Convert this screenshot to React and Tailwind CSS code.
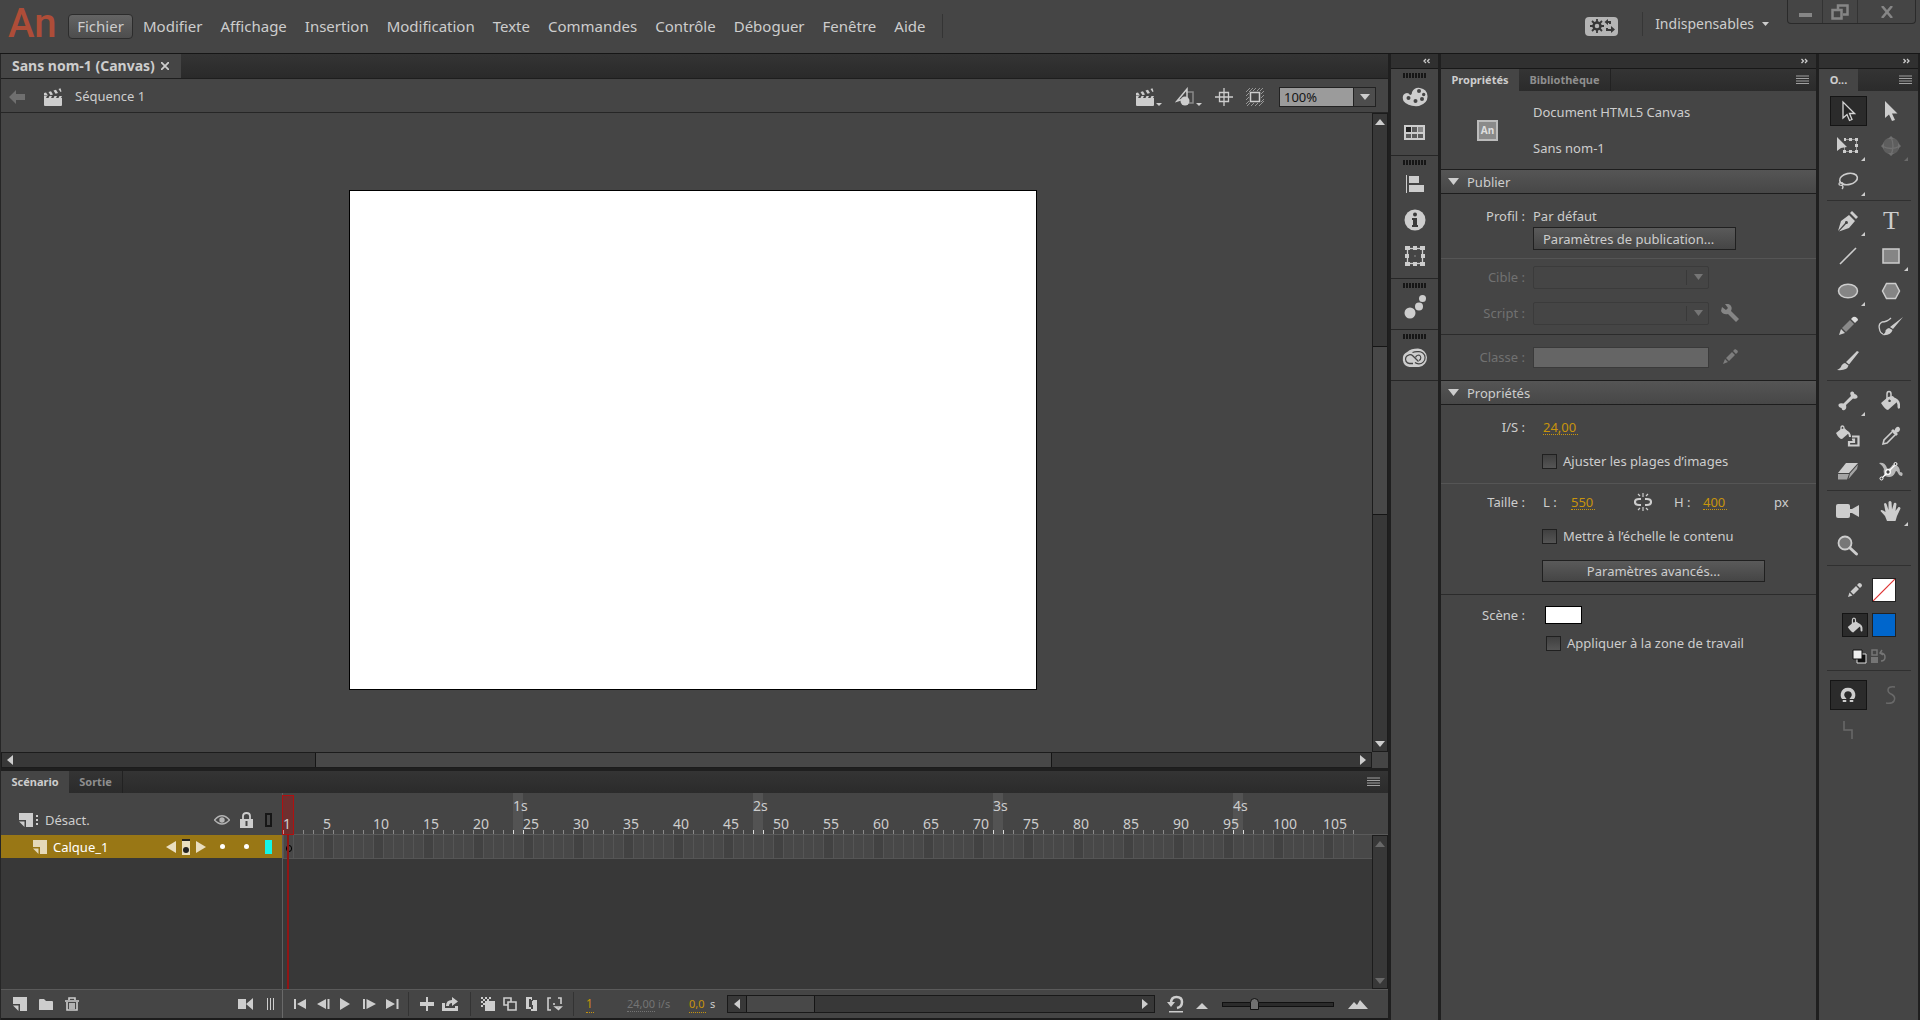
import clsx from 'clsx';

const menus = ['Modifier', 'Affichage', 'Insertion', 'Modification', 'Texte', 'Commandes', 'Contrôle', 'Déboguer', 'Fenêtre', 'Aide'];

const Svg = ({ w = 20, h = 20, className, children }) => (
  <svg width={w} height={h} viewBox={`0 0 ${w} ${h}`} fill="currentColor" className={clsx('shrink-0', className)} aria-hidden="true">
    {children}
  </svg>
);

const line = { fill: 'none', stroke: 'currentColor' };

const Tri = ({ dir, className }) => {
  const d = {
    up: 'M0 8L5 2L10 8Z',
    down: 'M0 2H10L5 8Z',
    left: 'M8 0V10L2 5Z',
    right: 'M2 0V10L8 5Z',
  };
  return <Svg w={10} h={10} className={className}><path d={d[dir]} /></Svg>;
};

const Clapper = () => (
  <Svg w={20} h={20}>
    <path d="M1 11H19V18Q19 19 18 19H2Q1 19 1 18Z" />
    <path d="M1 6L3 5.500L5 8.500H1ZM5.500 5L8 4.300L10 7.500L7.500 8.300ZM10.500 3.500L13 2.800L15 6L12.500 6.800ZM15.500 2L17.500 1.200L18.500 4.500L17.500 5Z" />
    <path d="M1 9H4L3 11H1ZM6.500 9H9L8 11H5.500ZM11.500 9H14L13 11H10.500ZM16.500 9H19L18 11H15.500Z" />
  </Svg>
);

const Shapes = () => (
  <Svg w={20} h={20}>
    <path d="M11 5H18V16H11" {...line} strokeWidth="1.500" opacity="0.500" />
    <path d="M12 2V11L2 14Z" {...line} strokeWidth="1.500" />
    <circle cx="10" cy="14" r="4.500" />
  </Svg>
);

const Center = () => (
  <Svg w={18} h={18}><path d="M9 0V18M0 9H18M4.500 4.500H13.500V13.500H4.500Z" {...line} strokeWidth="1.300" /></Svg>
);

const Clip = () => (
  <Svg w={18} h={18}>
    <rect x="4.500" y="4.500" width="9" height="9" {...line} strokeWidth="1.500" />
    <path d="M0 4L4 0M3 4L7 0M7 3L10 0M11 3L14 0M14 3L17 0M15 6L18 3M15 10L18 7M15 14L18 11M0 8L3 5M0 12L3 9M0 16L3 13M1 18L4 15M5 18L8 15M9 18L12 15M13 18L18 13" {...line} strokeWidth="1" opacity="0.600" />
  </Svg>
);

const Menu = () => (
  <Svg w={13} h={10}><path d="M0 1H13M0 3.500H13M0 6H13M0 8.500H13" {...line} strokeWidth="1" /></Svg>
);

const Chevrons = ({ back }) => (
  <Svg w={7} h={6}>
    <path d={back ? 'M3 1L1 3L3 5M6.500 1L4.500 3L6.500 5' : 'M0.500 1L2.500 3L0.500 5M4 1L6 3L4 5'} {...line} strokeWidth="1.300" />
  </Svg>
);

const Bucket = () => (
  <Svg w={22} h={22}>
    <path fillRule="evenodd" d="M1 13L8 7L13 6L17 12L8 20Q5 19.500 1 13ZM9.500 9.500A1.300 1.300 0 1 0 9.600 9.500" />
    <path d="M7 9V4Q7 1.500 9 1.500Q11 1.500 11 4V10" {...line} strokeWidth="1.500" />
    <path d="M13 7Q19.500 9 20 14V18Q18 20 17.500 17Q18 12 14 10Z" />
  </Svg>
);

const Pencil = () => (
  <Svg w={20} h={20}>
    <path d="M1 19L3 13L7 17Z" />
    <path d="M4 12L12 4L16 8L8 16Z" opacity="0.500" />
    <path d="M13 3L15 1Q17 0 19 2T19 5L17 7Z" fill="#ddd" />
  </Svg>
);

const ic = {
  palette: (
    <Svg w={26} h={20}>
      <path fillRule="evenodd" d="M10 5Q13 0 18 1Q25 2 25.500 9Q26 16 17 19Q6 20 1.500 14Q-1 7 5 6Q7 6 8 8Q10 8 10 5ZM15 4A2 2 0 1 0 19 4A2 2 0 1 0 15 4M20 7.500A1.700 1.700 0 1 0 23.400 7.500A1.700 1.700 0 1 0 20 7.500M18 12A2 2 0 1 0 22 12A2 2 0 1 0 18 12M11.500 14A2 2 0 1 0 15.500 14A2 2 0 1 0 11.500 14M4.500 11A2 2 0 1 0 8.500 11A2 2 0 1 0 4.500 11" />
    </Svg>
  ),
  swatches: (
    <Svg w={21} h={16}>
      <path d="M0 0H21V15H0Z" />
      <path d="M2 2H7V7H2Z" fill="#222" />
      <path d="M8 2H13V7H8ZM2 9H7V13H2ZM8 9H13V13H8ZM14 9H19V13H14Z" fill="#5c5c5c" />
      <path d="M14 2H19V7H14Z" fill="#888" />
    </Svg>
  ),
  align: <Svg w={18} h={18}><path d="M0 0H1V18H0ZM3 1H13V8H3ZM3 10H18V17H3Z" /></Svg>,
  info: (
    <Svg w={22} h={22}>
      <circle cx="11" cy="11" r="10.500" />
      <circle cx="11" cy="5.500" r="2" fill="#3a3a3a" />
      <path d="M8 9H13V16H14V18H8V16H9V11H8Z" fill="#3a3a3a" />
    </Svg>
  ),
  transform: (
    <Svg w={20} h={20}>
      <rect x="2.500" y="2.500" width="15" height="15" {...line} strokeWidth="1.300" />
      <path d="M0 0H5V4H0ZM8 0H12V4H8ZM15 0H20V4H15ZM0 8H4V12H0ZM16 8H20V12H16ZM0 16H5V20H0ZM8 16H12V20H8ZM15 16H20V20H15ZM9.500 9.500H10.500V10.500H9.500Z" />
    </Svg>
  ),
  dots: <Svg w={22} h={24}><circle cx="6" cy="18" r="5.500" /><circle cx="15" cy="11.500" r="4" /><circle cx="18.500" cy="3.500" r="3.500" /></Svg>,
  cloud: (
    <Svg w={28} h={20}>
      <path d="M8.500 19A8 8 0 0 1 6.500 3.800Q10 0.500 17 0.500A9.300 9.300 0 0 1 18 19Z" />
      <path d="M12 15.500H8.500A4.400 4.400 0 1 1 12 8L17.500 13.500" fill="none" stroke="#454545" strokeWidth="1.300" />
      <path d="M11.500 4.500Q14 3.500 17 3.700A6.100 6.100 0 1 1 17.500 15.800Q15.500 15.800 14 14.500M14.500 9.500Q15.500 7 18 7A3 3 0 0 1 18 12.500" fill="none" stroke="#454545" strokeWidth="1.200" />
    </Svg>
  ),
};

const tool = {
  select: <Svg w={16} h={22}><path d="M3 2V18L7 14.500L9.500 20.500L12 19.500L9.500 13.500H14.500Z" fill="#262626" stroke="#d4d4d4" strokeWidth="1.300" /></Svg>,
  subselect: <Svg w={16} h={22}><path d="M2 1V18L6 14.500L9 21L12 20L9 13.500H14.500Z" /></Svg>,
  free: (
    <Svg w={22} h={18}>
      <path d="M0 0V14L4 11L10 10Z" />
      <path d="M8 2.500H19.500V14.500H7.500V10" {...line} strokeWidth="1" opacity="0.600" />
      <path d="M6 13H9V16H6ZM12 13H15V16H12ZM18 13H21V16H18ZM18 1H21V4H18ZM12 1H15V4H12ZM18 7H21V10H18ZM7 1H9V4H7Z" />
    </Svg>
  ),
  globe: (
    <Svg w={20} h={20} className="text-[#707070]">
      <circle cx="10" cy="10" r="8.500" opacity="0.600" />
      <path d="M10 1Q14 10 10 19M1 10Q10 15 19 10" {...line} strokeWidth="1.300" />
      <path d="M10 0L13 3H7ZM10 20L13 17H7ZM0 10L3 7V13ZM20 10L17 7V13Z" />
    </Svg>
  ),
  lasso: (
    <Svg w={22} h={18}>
      <ellipse cx="11.500" cy="7" rx="9" ry="5.500" {...line} strokeWidth="1.600" transform="rotate(-12 11.500 7)" />
      <path d="M4 10Q1 11 2.500 13Q6 14 6 11.500Q5 10 3.500 11.500M5 13Q7 15 5 17" {...line} strokeWidth="1.300" />
    </Svg>
  ),
  pen: (
    <Svg w={22} h={22}>
      <path d="M1 21L4 11L12 5L18 11L12 18L2 21.500L9 14A1.500 1.500 0 1 0 8 13Z" />
      <path d="M13 3L15 1L21 7L19 9Z" />
    </Svg>
  ),
  text: <span className="font-['Liberation_Serif',serif] text-[26px] leading-6">T</span>,
  line: <Svg w={18} h={18}><path d="M1 17L17 1" {...line} strokeWidth="1.600" /></Svg>,
  rect: <Svg w={18} h={16}><rect x="1" y="1" width="16" height="14" fill="#858585" stroke="currentColor" strokeWidth="1.500" /></Svg>,
  oval: <Svg w={22} h={16}><ellipse cx="11" cy="8" rx="9.500" ry="6.800" fill="#858585" stroke="currentColor" strokeWidth="1.500" /></Svg>,
  poly: <Svg w={20} h={18}><path d="M5.500 1.500H14.500L18.500 9L14.500 16.500H5.500L1.500 9Z" fill="#858585" stroke="currentColor" strokeWidth="1.500" /></Svg>,
  pencil: <Pencil />,
  artbrush: (
    <Svg w={26} h={20}>
      <path d="M25 1L15 13L12 11Z M11 12L14.500 14Q13 20 4 19Q8 17 7.500 14.500Q9 12 11 12Z" />
      <path d="M13 2Q9 6 4 6Q0 8 1.500 13Q2 17 5 18" {...line} strokeWidth="1.300" />
    </Svg>
  ),
  brush: <Svg w={22} h={20}><path d="M22 1L20 0L9 11L12 13.500Z M8 12L11.500 14.500Q10 20 0 19Q4 17 4.500 14.500Q6 12 8 12Z" /></Svg>,
  bone: <Svg w={20} h={20}><path d="M13 5Q11 1 14 0.500Q16 0 16.500 3Q20 4 19.500 6.500Q18 8.500 15 7.500L8 14Q9 18 6.500 19Q4 20 3.500 17Q0 16 0.500 13.500Q2 11.500 5.500 12.500Z" /></Svg>,
  bucket: <Bucket />,
  ink: (
    <Svg w={24} h={22}>
      <path d="M0 8L5 4L9 3.500L13 8L6 14Q3 14 0 8Z" />
      <path d="M5 6V3Q5 1 6.500 1T8 3V7" {...line} strokeWidth="1.300" />
      <path d="M10 5Q15 7 15 12H13Q13 9 11 8Z" />
      <path d="M16 11.500H22.500V20.500H13V17H18V14.500H16" {...line} strokeWidth="2.200" />
    </Svg>
  ),
  dropper: (
    <Svg w={20} h={20}>
      <path d="M10 5L12 3L13.500 4.500Q15 0 18 1Q20 3 18.500 5Q17 6.500 15.500 6.500L17 8L15 10Z" />
      <path d="M11 6L3 14L2 18L6 17L14 9" {...line} strokeWidth="1.600" />
    </Svg>
  ),
  eraser: (
    <Svg w={22} h={18}>
      <path d="M9 1H21L12 11H1Z" />
      <path d="M1 12H12L10 17.500H1ZM13 11.500L21 2.500L20 7L11.500 17Z" opacity="0.700" />
    </Svg>
  ),
  width: (
    <Svg w={24} h={20}>
      <path d="M0 2Q6 1 8 7Q9 9 12 6Q14 2 17 4Q21 6 21 11Q25 11 23 15Q20 15 19 12Q17 8 16 12Q13 18 6 15Q4 12 5 8Q3 4 0 2Z" opacity="0.850" />
      <path d="M2 18L17 3" stroke="#fff" strokeWidth="1.300" />
      <circle cx="9" cy="11" r="2.300" fill="#454545" stroke="#fff" strokeWidth="1.300" />
      <circle cx="2.500" cy="17.500" r="1.500" fill="#454545" stroke="#fff" />
      <circle cx="16.500" cy="3" r="1.500" fill="#454545" stroke="#fff" />
    </Svg>
  ),
  camera: <Svg w={24} h={16}><rect x="0" y="1" width="14" height="14" rx="2" /><path d="M14 6H16L23 2V14L16 10H14Z" /></Svg>,
  hand: (
    <Svg w={22} h={22}>
      <path d="M7 21L5 16L0.500 11Q1 8.500 5.500 12L4 4Q5 2 6.500 4L8.500 10L8.500 2Q10 0 11.500 2L12 9.500L14 3Q16 2 16.500 4L15.500 11L18.500 7Q20.500 6.500 20.500 8.500L17 16L15.500 21Z" />
    </Svg>
  ),
  zoom: (
    <Svg w={22} h={22}>
      <circle cx="8" cy="8" r="6.500" fill="#777" stroke="currentColor" strokeWidth="1.800" />
      <path d="M13 13L19.500 19" {...line} strokeWidth="3" strokeLinecap="round" />
    </Svg>
  ),
  magnet: (
    <Svg w={18} h={18}>
      <path d="M5.500 16V13Q3 11 3.500 8Q4.500 3.500 9 3.500T14.500 8Q15 11 12.500 13V16" {...line} strokeWidth="3.500" />
      <path d="M3 13.500H8M10 13.500H15" stroke="#2b2b2b" />
    </Svg>
  ),
  smooth: <Svg w={14} h={20} className="text-[#696969]"><path d="M11 2Q4 1 4 5Q4 8 8 9.500Q12 12 10 16Q8 19 2 18" {...line} strokeWidth="1.500" /></Svg>,
  straighten: <Svg w={14} h={20} className="text-[#696969]"><path d="M3 1V10H11V19" {...line} strokeWidth="1.500" /></Svg>,
};

const toolGroups = [
  [
    ['select', 'Outil Sélection', 'on'], ['subselect', 'Sous-sélection'],
    ['free', 'Transformation libre', 'more'], ['globe', 'Rotation 3D', 'dim'],
    ['lasso', 'Lasso', 'more'], null,
  ],
  [
    ['pen', 'Plume', 'more'], ['text', 'Texte'],
    ['line', 'Ligne'], ['rect', 'Rectangle', 'more'],
    ['oval', 'Ovale', 'more'], ['poly', 'Polygone'],
    ['pencil', 'Crayon'], ['artbrush', 'Pinceau artistique'],
    ['brush', 'Pinceau'], null,
  ],
  [
    ['bone', 'Segment', 'more'], ['bucket', 'Pot de peinture'],
    ['ink', 'Encrier'], ['dropper', 'Pipette'],
    ['eraser', 'Gomme'], ['width', 'Largeur'],
  ],
  [
    ['camera', 'Caméra'], ['hand', 'Main', 'more'],
    ['zoom', 'Zoom'], null,
  ],
];

const modifiers = [['magnet', 'Accrocher', 'on'], ['smooth', 'Lisser'], ['straighten', 'Redresser'], null];

const ToolGrid = ({ tools }) => (
  <div className="grid grid-cols-[42px_44px] auto-rows-[35px] place-items-center">
    {tools.map((t, i) => t ? (
      <button key={t[0]} aria-label={t[1]} className={clsx('relative w-[37px] h-[30px] flex items-center justify-center', t[2] === 'on' && 'bg-[#2b2b2b] border border-[#151515]')}>
        {tool[t[0]]}
        {(t[2] === 'more' || t[2] === 'dim') && (
          <span className={clsx('absolute right-0.5 bottom-0 border-l-4 border-b-4 border-l-transparent', t[2] === 'dim' ? 'border-b-[#6a6a6a]' : 'border-b-[#cdcdcd]')} />
        )}
      </button>
    ) : <span key={i} />)}
  </div>
);

const Rule = () => <div className="h-px bg-[#303030] w-[84px]" />;

const Header = () => (
  <header className="h-[54px] shrink-0 flex items-start border-b border-[#161616] pl-2 pr-1">
    <span className="text-[#ae4d38] font-['Roboto',sans-serif] font-medium text-[40px] leading-[48px] w-[60px]">An</span>
    <nav className="flex items-start pt-3.5 text-[15px] leading-[22px]">
      <button className="h-[25px] w-[65px] mr-px flex items-start justify-center rounded-sm border border-[#2c2c2c] bg-linear-to-b from-[#646464] to-[#4d4d4d]">Fichier</button>
      {menus.map(m => <button key={m} className="px-[9px] h-[25px] flex items-start pt-px">{m}</button>)}
      <span className="h-6 w-px bg-[#343434] ml-2" />
    </nav>
    <div className="ml-auto flex items-center h-12">
      <button aria-label="Synchroniser les paramètres" className="w-[33px] h-[19px] mt-1 rounded bg-[#b4b4b4] text-[#383838] flex items-center justify-center">
        <Svg w={26} h={14}>
          <circle cx="8" cy="7" r="3.500" {...line} strokeWidth="2.500" />
          <path d="M8 0V3M8 11V14M1 7H4M12 7H15M3 2L5.500 4.500M10.500 9.500L13 12M13 2L10.500 4.500M5.500 9.500L3 12" {...line} strokeWidth="1.800" />
          <path d="M19 0V2H22V5H20V4H19V6L15.500 3ZM22 7L26 10.500L22 14V12H17V9H19V10H22Z" />
        </Svg>
      </button>
      <span className="h-6 w-px bg-[#363636] ml-6 mr-3" />
      <button className="flex items-center gap-2 text-sm">Indispensables <Svg w={7} h={4}><path d="M0 0H7L3.500 4Z" /></Svg></button>
    </div>
    <div className="flex h-6 ml-[18px] border border-t-0 border-[#2a2a2a] rounded-b text-[#868686] divide-x divide-[#333]">
      <button aria-label="Réduire" className="w-[35px] flex items-center justify-center"><Svg w={13} h={14}><path d="M0 8H13V12H0Z" /></Svg></button>
      <button aria-label="Restaurer" className="w-[35px] flex items-center justify-center">
        <Svg w={18} h={16}><path d="M7 5V1.500H16.500V10.500H12M1.500 6H10.500V14.500H1.500Z" {...line} strokeWidth="2.500" /></Svg>
      </button>
      <button aria-label="Fermer" className="w-[57px] flex items-center justify-center"><Svg w={14} h={12}><path d="M2 0L12 12M12 0L2 12" {...line} strokeWidth="2.500" /></Svg></button>
    </div>
  </header>
);

const ScrollV = ({ dim, thumb }) => (
  <div className={clsx('w-4 shrink-0 flex flex-col items-center border border-[#1c1c1c] bg-[#383838]', dim && 'text-[#696969]')}>
    <button aria-label="Défiler vers le haut" className="h-4 flex items-center"><Tri dir="up" /></button>
    <div className="w-full flex-1 flex flex-col">
      {thumb && (
        <>
          <div className="flex-[217]" />
          <div className="flex-[167] border-y border-[#151515] bg-[#484848]" />
          <div className="flex-[223]" />
        </>
      )}
    </div>
    <button aria-label="Défiler vers le bas" className="h-3.5 flex items-center"><Tri dir="down" /></button>
  </div>
);

const EditBar = () => (
  <div className="h-[34px] shrink-0 flex items-center border-b border-[#262626] pl-2 pr-3 pt-0.5">
    <button aria-label="Retour" className="text-[#6f6f6f]"><Svg w={16} h={14}><path d="M0 7L7 0V4H16V10H7V14Z" /></Svg></button>
    <span className="ml-[18px]"><Clapper /></span>
    <span className="ml-3">Séquence 1</span>
    <div className="ml-auto flex items-center gap-[13px]">
      <button aria-label="Modifier la séquence" className="flex items-end gap-px"><Clapper /><Svg w={6} h={4}><path d="M0 0H6L3 3Z" /></Svg></button>
      <button aria-label="Modifier les symboles" className="flex items-end gap-px"><Shapes /><Svg w={6} h={4}><path d="M0 0H6L3 3Z" /></Svg></button>
      <button aria-label="Centrer la scène"><Center /></button>
      <button aria-label="Rogner le contenu"><Clip /></button>
      <div className="flex ml-0.5 h-5 w-[97px] border border-[#222]">
        <input aria-label="Zoom" defaultValue="100%" className="min-w-0 flex-1 bg-[#9b9b9b] text-[#151515] pl-1 text-[13px] leading-4" />
        <button aria-label="Niveaux de zoom" className="w-[22px] flex items-center justify-center border-l border-[#222] bg-[#4d4d4d]"><Tri dir="down" /></button>
      </div>
    </div>
  </div>
);

const Stage = () => (
  <main className="flex-1 min-h-0 flex flex-col">
    <div className="flex-1 min-h-0 flex">
      <div className="flex-1 flex justify-center items-center pl-3 pt-3.5">
        <div className="w-[688px] h-[500px] bg-white border border-black" />
      </div>
      <ScrollV thumb />
    </div>
    <div className="h-4 flex">
      <div className="flex-1 flex items-center border border-[#1c1c1c] bg-[#383838]">
        <button aria-label="Défiler à gauche" className="w-4 flex justify-center"><Tri dir="left" /></button>
        <div className="flex-1 h-full flex">
          <div className="flex-[297]" />
          <div className="flex-[733] border-x border-[#151515] bg-[#484848]" />
          <div className="flex-[303]" />
        </div>
        <button aria-label="Défiler à droite" className="w-4 flex justify-center"><Tri dir="right" /></button>
      </div>
      <div className="w-4" />
    </div>
  </main>
);

const frames = Array.from({ length: 108 }, (_, i) => i + 1);

const Ruler = () => (
  <div className="flex h-[42px] overflow-hidden border-b border-[#5a5a5a]">
    {frames.map(f => (
      <div key={f} className={clsx('w-[10px] shrink-0 flex flex-col justify-end text-sm leading-5 whitespace-nowrap', f % 24 === 0 && 'bg-[#535353]')}>
        <span className="h-[18px] w-0 relative z-10">{f % 24 === 0 && `${f / 24}s`}</span>
        <span className="h-4 w-0 relative z-10">{(f === 1 || f % 5 === 0) && f}</span>
        <span className={clsx('h-1 w-px', f % 24 < 2 ? 'bg-[#ddd]' : 'bg-[#8a8a8a]')} />
      </div>
    ))}
  </div>
);

const NewLayer = () => <Svg w={14} h={14}><path d="M0 0H14V14H7V7H0Z" /><path d="M0 8.500H5.500V14Z" /></Svg>;

const Eye = () => (
  <Svg w={16} h={12} className="text-[#b4b4b4]">
    <path d="M0.500 6Q8 -2.500 15.500 6Q8 14 0.500 6Z" {...line} strokeWidth="1.500" />
    <circle cx="8" cy="6" r="2.700" />
  </Svg>
);

const Lock = () => (
  <Svg w={13} h={16}>
    <path d="M3 8V4Q3 1 6.500 1T10 4V8" {...line} strokeWidth="1.800" />
    <path fillRule="evenodd" d="M0 7H13V16H0ZM5.500 9V14H7.500V9Z" />
  </Svg>
);

const Small = ({ label, d, w = 14, stroke, className }) => (
  <button aria-label={label} className={clsx('shrink-0', className)}>
    <Svg w={w} h={14}>{stroke ? <path d={d} {...line} strokeWidth="1.600" /> : <path d={d} />}</Svg>
  </button>
);

const Sep = () => <span className="h-6 w-px bg-[#333] shrink-0" />;

const TimelineFooter = () => (
  <div className="h-[29px] shrink-0 flex border-t border-[#5a5a5a]">
    <div className="w-[281px] shrink-0 flex items-center pl-3 pr-2 gap-3">
      <button aria-label="Nouveau calque"><NewLayer /></button>
      <Small label="Nouveau dossier" d="M0 3Q0 2 1 2H5L7 4H13Q14 4 14 5V13H0Z" />
      <Small label="Supprimer" stroke d="M0 4H14M4 3V1H10V3M2 5V13H12V5M5 6V12M7 6V12M9 6V12" />
      <Small label="Ajouter une caméra" className="ml-auto mr-0.5" w={15} d="M0 2H8V12H0ZM8 7L15 1V13Z" />
      <Svg w={7} h={14}><path d="M0.500 1V13M3.500 1V13M6.500 1V13" {...line} strokeWidth="1" /></Svg>
    </div>
    <div className="flex-1 flex items-center border-l border-[#6a6a6a] pl-[11px] pr-5">
      <div className="w-[114px] flex gap-[9px]">
        <Small label="Première image" d="M0 2H2V12H0ZM12 2V12L3 7Z" />
        <Small label="Image précédente" d="M9 2V12L0 7ZM10.500 2H12.500V12H10.500Z" />
        <Small label="Lire" d="M0 1V13L10 7Z" />
        <Small label="Image suivante" d="M0 2H2V12H0ZM3.500 2V12L13 7Z" />
        <Small label="Dernière image" d="M0 2V12L9 7ZM10.500 2H12.500V12H10.500Z" />
      </div>
      <Sep />
      <div className="flex gap-2 px-[11px]">
        <Small label="Centrer l’image" d="M6 0H8V5H14V9H8V14H6V9H0V5H6Z" />
        <Small label="Boucle" w={17} d="M0 6H3V11H13V9H16V14H0ZM4 9Q4 3 10 3V0L16 4.500L10 9V6Q7 6 7 9Z" />
      </div>
      <Sep />
      <div className="flex gap-2 px-2.5">
        <Small label="Pelure d’oignon" d="M4 4H14V14H4ZM0 0H2V2H0ZM4 0H6V2H4ZM8 0H10V2H8ZM2 2H4V4H2ZM6 2H8V4H6ZM0 4H2V6H0ZM2 6H4V8H2ZM0 8H2V10H0Z" />
        <Small label="Contours de pelure" stroke d="M5 8H1V1H8V5M5 5H13V13H5Z" />
        <Small label="Modifier plusieurs images" d="M1 0H7V3H6V2H4V10H6V12H1ZM8 3H12V14H6V12H8V8H7V4H8Z" />
        <Small label="Modifier les marqueurs" w={16} stroke d="M4 1H1V13H4M11 1H14V7M7 6V8M8.500 10H14L11.500 12.500Z" />
      </div>
      <Sep />
      <input aria-label="Image en cours" defaultValue="1" className="ml-3 w-2 shrink-0 text-xs leading-4 text-[#c8940c] border-b border-dotted border-[#c8940c]" />
      <span className="ml-[33px] w-[46px] shrink-0 whitespace-nowrap text-[11px] leading-4 text-[#747474]"><span className="border-b border-dotted">24,00</span> i/s</span>
      <label className="ml-4 flex gap-1 items-center text-[11px] leading-4 shrink-0">
        <input defaultValue="0,0" className="w-[17px] text-[#c8940c] border-b border-dotted border-[#c8940c]" />s
      </label>
      <div className="ml-3 flex-1 h-[18px] flex items-center border border-[#191919] bg-[#383838]">
        <button aria-label="Images précédentes" className="w-[18px] flex justify-center"><Tri dir="left" /></button>
        <span className="w-[69px] h-full border-x border-[#151515] bg-[#484848]" />
        <button aria-label="Images suivantes" className="ml-auto w-[18px] flex justify-center"><Tri dir="right" /></button>
      </div>
      <button aria-label="Rétablir le zoom" className="ml-3">
        <Svg w={17} h={18}><path d="M4 8Q4 2 9.500 2Q15 2 15 7Q15 12 10 13" {...line} strokeWidth="2.500" /><path d="M0 7H8L4 12ZM2 16H16V17.500H2Z" /></Svg>
      </button>
      <Svg w={12} h={12} className="ml-3"><path d="M0 11L6 5L12 11Z" /></Svg>
      <input type="range" aria-label="Zoom du scénario" defaultValue="27" className="mx-3.5 w-[112px] h-[5px] appearance-none bg-[#2b2b2b] border border-[#111] [&::-webkit-slider-thumb]:appearance-none [&::-webkit-slider-thumb]:w-[9px] [&::-webkit-slider-thumb]:h-3 [&::-webkit-slider-thumb]:rounded-t-full [&::-webkit-slider-thumb]:bg-[#707070] [&::-webkit-slider-thumb]:border [&::-webkit-slider-thumb]:border-[#111]" />
      <Svg w={20} h={12}><path d="M0 11L6 4L9 7L12 2L20 11Z" /></Svg>
    </div>
  </div>
);

const Timeline = () => (
  <section className="h-[249px] shrink-0 flex flex-col border-b-2 border-[#1c1c1c]">
    <div className="h-[22px] shrink-0 flex items-stretch bg-linear-to-b from-[#343434] to-[#2b2b2b] font-bold text-[11px]">
      <button className="w-[68px] bg-[#454545]">Scénario</button>
      <button className="w-[54px] border-r border-[#222] text-[#8e8e8e]">Sortie</button>
      <button aria-label="Menu du scénario" className="ml-auto mr-2 text-[#a0a0a0]"><Menu /></button>
    </div>
    <div className="flex-1 min-h-0 flex relative">
      <div className="w-[281px] shrink-0 flex flex-col">
        <div className="h-[42px] flex items-end pb-[5px] pl-[18px] text-[13px] leading-5">
          <div className="flex items-center flex-1">
            <NewLayer />
            <Svg w={6} h={14}><path d="M3 2H5V4H3ZM3 6H5V8H3ZM3 10H5V12H3Z" /></Svg>
            <span className="ml-1.5 mr-auto">Désact.</span>
            <div className="flex items-center gap-2.5 pr-2.5">
              <Eye />
              <Lock />
              <span className="w-[7px] h-3.5 ml-0.5 border-2 border-[#161616]" />
            </div>
          </div>
        </div>
        <div className="h-[23px] flex items-center bg-[#997715] pl-8 text-white text-[13px] leading-5">
          <span className="text-[#e5d9b8]"><NewLayer /></span>
          <span className="ml-1.5 mr-auto">Calque_1</span>
          <div className="flex items-center pr-2.5 text-[#eadfc0]">
            <Svg w={10} h={12}><path d="M10 0V12L0 6Z" /></Svg>
            <Svg w={8} h={16} className="mx-[6px]"><path d="M0 0H8V16H0Z" /><path d="M0 0H8V2H0Z" fill="#222" /><circle cx="4" cy="11" r="3" fill="#222" /></Svg>
            <Svg w={10} h={12}><path d="M0 0V12L10 6Z" /></Svg>
            <span className="size-[5px] rounded-full bg-white ml-3.5" />
            <span className="size-[5px] rounded-full bg-white ml-[19px]" />
            <span className="w-[7px] h-3.5 bg-[#13f5e6] ml-4" />
          </div>
        </div>
        <div className="flex-1 bg-[#383838]" />
      </div>
      <div className="flex-1 min-w-0 flex flex-col border-l border-[#5e5e5e] bg-[#383838]">
        <div className="bg-[#454545]"><Ruler /></div>
        <div className="flex-1 flex min-h-0">
          <div className="flex-1 min-w-0">
            <div className="h-6 flex overflow-hidden border-b border-[#555] bg-[#484848]">
              {frames.map(f => <div key={f} className={clsx('w-[10px] shrink-0 border-l border-[#555] flex items-end justify-center pb-1.5', f % 5 === 0 && 'bg-[#424242]')}>
                {f === 1 && <span className="w-1.5 h-[7px] rounded-sm border border-black" />}
              </div>)}
            </div>
          </div>
          <ScrollV dim />
        </div>
      </div>
      <div className="absolute left-[281px] inset-y-0 w-3 flex flex-col items-center pt-0.5">
        <div className="h-10 w-full bg-[#b01010]/40 border border-[#b01010]" />
        <div className="flex-1 w-0.5 bg-[#8f1515]" />
      </div>
    </div>
    <TimelineFooter />
  </section>
);

const iconGroups = [['palette', 'swatches'], ['align', 'info', 'transform'], ['dots'], ['cloud']];

const Grip = () => (
  <Svg w={24} h={6} className="text-[#161616]"><path d="M1 0V5M4 0V5M7 0V5M10 0V5M13 0V5M16 0V5M19 0V5M22 0V5" {...line} strokeWidth="2" /></Svg>
);

const DockTop = ({ back }) => (
  <div className="h-[15px] shrink-0 flex items-center justify-end pr-2 border-b border-[#181818] bg-[#303030]"><Chevrons back={back} /></div>
);

const IconDock = () => (
  <aside className="w-[47px] shrink-0 flex flex-col">
    <DockTop back />
    {iconGroups.map(g => (
      <div key={g[0]} className="flex flex-col items-center py-1 border-b border-[#262626]">
        <Grip />
        {g.map(n => <button key={n} aria-label={n} className="h-9 flex items-center">{ic[n]}</button>)}
      </div>
    ))}
  </aside>
);

const SectionHead = ({ children }) => (
  <h2 className="h-[25px] flex items-center gap-2 pl-[7px] border-y border-[#1d1d1d] bg-linear-to-b from-[#555] to-[#474747]">
    <Svg w={11} h={7}><path d="M0 0H11L5.500 7Z" /></Svg>{children}
  </h2>
);

const Row = ({ label, id, dim, children }) => (
  <div className={clsx('flex items-center gap-2 h-5', dim && 'text-[#717171]')}>
    <label htmlFor={id} className="w-[84px] text-right">{label}</label>
    {children}
  </div>
);

const Hot = ({ id, value, className }) => (
  <input id={id} defaultValue={value} className={clsx('h-4 text-[#c8940c] border-b border-dotted border-[#c8940c]', className)} />
);

const Check = ({ label, className }) => (
  <label className={clsx('flex items-center gap-1.5 h-5', className)}>
    <input type="checkbox" className="appearance-none size-[15px] border border-[#202020] bg-linear-to-b from-[#404040] to-[#555]" />{label}
  </label>
);

const Combo = ({ id }) => (
  <span className="relative w-[176px] h-[23px]">
    <select id={id} disabled className="w-full h-full appearance-none border border-[#3b3b3b] rounded-xs" />
    <span className="absolute right-0 inset-y-1 w-[23px] flex items-center justify-center border-l border-[#393939] text-[#757575] pointer-events-none">
      <Svg w={9} h={6}><path d="M0 0H9L4.500 6Z" /></Svg>
    </span>
  </span>
);

const PanelTabs = ({ children }) => (
  <div className="h-[22px] shrink-0 flex bg-linear-to-b from-[#343434] to-[#2b2b2b] font-bold text-[11px]">{children}</div>
);

const pushButton = 'border border-[#202020] bg-linear-to-b from-[#5a5a5a] to-[#454545]';

const Properties = () => (
  <aside className="w-[375px] shrink-0 flex flex-col text-[13px] leading-5">
    <DockTop />
    <PanelTabs>
      <button className="w-[78px] bg-[#454545]">Propriétés</button>
      <button className="w-[92px] border-r border-[#222] text-[#8e8e8e]">Bibliothèque</button>
      <button aria-label="Menu du panneau" className="ml-auto mr-[7px] text-[#a0a0a0]"><Menu /></button>
    </PanelTabs>
    <div className="flex h-[78px] items-center pl-9">
      <span className="size-[21px] border-2 border-[#bbb] bg-[#8a8a8a] text-[10px] leading-4 font-bold text-center text-[#ddd]">An</span>
      <div className="ml-[35px] flex flex-col gap-4">
        <span>Document HTML5 Canvas</span>
        <span>Sans nom-1</span>
      </div>
    </div>
    <SectionHead>Publier</SectionHead>
    <div className="pt-3 pb-2 border-b border-[#555]">
      <Row label="Profil :">Par défaut</Row>
      <button className={clsx('ml-[92px] mt-px w-[203px] h-[23px] pl-[9px] text-left flex items-center', pushButton)}>Paramètres de publication...</button>
    </div>
    <div className="pt-2 pb-[11px] flex flex-col gap-4 border-b border-[#2b2b2b]">
      <Row dim id="cible" label="Cible :"><Combo id="cible" /></Row>
      <Row dim id="script" label="Script :">
        <Combo id="script" />
        <button disabled aria-label="Modifier le script" className="ml-1">
          <Svg w={18} h={18}><path d="M1 3L5 6L7 4L4 0Q9 -1 10.500 3Q11 5 10 7L18 15L15 18L7 10Q2 11 0 7Z" fill="#858585" /></Svg>
        </button>
      </Row>
    </div>
    <div className="py-3">
      <Row dim id="classe" label="Classe :">
        <input id="classe" disabled className="w-[176px] h-[21px] border border-[#3a3a3a] bg-[#656565]" />
        <button disabled aria-label="Modifier la classe" className="ml-1"><Svg w={18} h={18}><path d="M2 16L4 11L7 14ZM5 10L11 4L14 7L8 13ZM12 3L14 1Q17 2 17 4L15 6Z" fill="#7d7d7d" /></Svg></button>
      </Row>
    </div>
    <div className="pt-px"><SectionHead>Propriétés</SectionHead></div>
    <div className="pt-3 pb-3 flex flex-col gap-3.5 border-b border-[#555]">
      <Row id="fps" label="I/S :"><Hot id="fps" value="24,00" className="ml-2.5 w-[35px]" /></Row>
      <Check className="pl-[101px]" label="Ajuster les plages d’images" />
    </div>
    <div className="pt-2 pb-3 flex flex-col gap-3.5 border-b border-[#2b2b2b]">
      <Row label="Taille :">
        <label htmlFor="w" className="ml-2.5 w-[20px]">L :</label>
        <Hot id="w" value="550" className="w-[24px]" />
        <button aria-label="Lier la largeur et la hauteur" className="ml-[31px]">
          <Svg w={18} h={18}>
            <path d="M7 6H5Q1 6 1 9T5 12H7M11 6H13Q17 6 17 9T13 12H11" {...line} strokeWidth="2.200" />
            <path d="M9 0V4M9 14V18M4 1L6 3M14 1L12 3M4 17L6 15M14 17L12 15" {...line} strokeWidth="1.200" />
          </Svg>
        </button>
        <label htmlFor="h" className="ml-3.5 w-[21px]">H :</label>
        <Hot id="h" value="400" className="w-[24px]" />
        <span className="ml-[39px]">px</span>
      </Row>
      <Check className="pl-[101px]" label="Mettre à l’échelle le contenu" />
      <button className={clsx('ml-[101px] w-[223px] h-[22px] flex items-center justify-center', pushButton)}>Paramètres avancés...</button>
    </div>
    <div className="pt-2.5 flex flex-col gap-2">
      <Row label="Scène :"><button aria-label="Couleur de la scène" className="ml-3 w-[37px] h-[18px] bg-white border border-black" /></Row>
      <Check className="pl-[105px]" label="Appliquer à la zone de travail" />
    </div>
  </aside>
);

const Tools = () => (
  <aside className="w-[99px] shrink-0 flex flex-col">
    <DockTop />
    <PanelTabs>
      <button className="w-[39px] bg-[#454545]">O...</button>
      <button aria-label="Menu des outils" className="ml-auto mr-1.5 text-[#a0a0a0]"><Menu /></button>
    </PanelTabs>
    <div className="pl-2 pt-0.5 flex flex-col gap-y-0.5">
      <ToolGrid tools={toolGroups[0]} />
      <Rule />
      <ToolGrid tools={toolGroups[1]} />
      <Rule />
      <ToolGrid tools={toolGroups[2]} />
      <Rule />
      <ToolGrid tools={toolGroups[3]} />
      <Rule />
      <div className="grid grid-cols-[26px_24px] gap-x-1 gap-y-[11px] pl-[15px] pt-2.5 items-center justify-items-center">
        <button aria-label="Contour"><Svg w={16} h={16}><path d="M1 15L2.500 10.500L5.500 13.500ZM3.500 9.500L9 4L12 7L6.500 12.500ZM10 3L12 1Q15 1 15 4L13 6Z" /></Svg></button>
        <button aria-label="Couleur de contour" className="size-6 bg-white border border-[#222]"><Svg w={22} h={22}><path d="M0 22L22 0" stroke="#d33" strokeWidth="1.200" /></Svg></button>
        <button aria-label="Remplissage" className="w-[26px] h-6 bg-[#2b2b2b] border border-[#151515] flex items-center justify-center">
          <svg width="17" height="17" viewBox="0 0 22 22" fill="currentColor">
            <path d="M1 13L8 7L13 6L17 12L8 20Q5 19.500 1 13ZM13 7Q19.500 9 20 14V18Q18 20 17.500 17Q18 12 14 10Z" />
            <path d="M7 9V4Q7 1.500 9 1.500Q11 1.500 11 4V10" {...line} strokeWidth="1.500" />
          </svg>
        </button>
        <button aria-label="Couleur de remplissage" className="size-6 bg-[#0066cc] border border-[#222]" />
      </div>
      <div className="flex gap-1 pl-[25px] pt-2.5 pb-1">
        <button aria-label="Noir et blanc"><Svg w={15} h={15}><path d="M5 5H14V14H5Z" fill="#111" stroke="#ddd" /><path d="M1 1H10V10H1Z" fill="#eee" stroke="#111" /></Svg></button>
        <button disabled aria-label="Permuter les couleurs" className="text-[#757575]"><Svg w={16} h={15}><path d="M1 1H6V6H1Z" {...line} strokeWidth="1.500" /><path d="M0 8H7V14H0Z" /><path d="M9 4Q14 4 14 8T10 12M11 1L9 4L12 6" {...line} strokeWidth="1.500" /></Svg></button>
      </div>
      <Rule />
      <div className="pt-1"><ToolGrid tools={modifiers} /></div>
    </div>
  </aside>
);

const App = () => (
  <div className="h-screen min-h-[960px] min-w-[1400px] flex flex-col overflow-hidden bg-[#454545] text-[#cdcdcd] font-['Noto_Sans','Open_Sans',sans-serif] text-[13px]">
    <Header />
    <div className="flex-1 min-h-0 flex gap-[3px] pr-0.5 bg-[#1f1f1f] [&>*]:bg-[#454545]">
      <div className="flex-1 min-w-0 flex flex-col border-l border-[#262626]">
        <div className="h-[25px] shrink-0 flex bg-linear-to-b from-[#343434] to-[#2a2a2a] border-b border-[#1e1e1e]">
          <div className="w-[180px] flex items-center gap-1.5 pl-[11px] bg-[#454545] font-bold text-sm leading-5 whitespace-nowrap">
            Sans nom-1 (Canvas)
            <button aria-label="Fermer le document"><Svg w={8} h={8}><path d="M0 0L8 8M8 0L0 8" {...line} strokeWidth="1.800" /></Svg></button>
          </div>
        </div>
        <EditBar />
        <Stage />
        <div className="h-[3px] shrink-0 bg-[#1f1f1f]" />
        <Timeline />
      </div>
      <IconDock />
      <Properties />
      <Tools />
    </div>
  </div>
);

export default App;
